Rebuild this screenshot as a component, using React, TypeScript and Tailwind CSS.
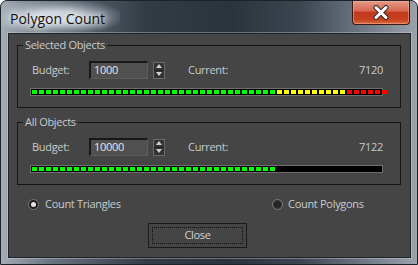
import React from "react";

const font = { fontFamily: '"Open Sans", "Noto Sans", sans-serif' };

function Bar({ green, yellow, red }: { green: number; yellow: number; red: number }) {
    const segs: string[] = [];
    for (let i = 0; i < green; i++) segs.push("bg-[#00ff00]");
    for (let i = 0; i < yellow; i++) segs.push("bg-[#ffff00]");
    for (let i = 0; i < red; i++) segs.push("bg-[#ff0000]");
    return (
        <div className="ml-[12px] mt-[9px] h-[8px] w-[353px] border border-[#6e6e6e] bg-black flex items-center gap-[2px] pl-[1px] overflow-visible">
            {segs.map((c, i) => (
                <div key={i} className={`h-[4px] w-[5px] shrink-0 ${c}`}></div>
            ))}
        </div>
    );
}

function Spinner() {
    return (
        <div className="ml-[5px] w-[12px] h-[17px] border border-[#6a6a6a] bg-[#333333] flex flex-col">
            <div className="flex-1 flex items-center justify-center border-b border-[#222222]">
                <svg width="6" height="4" viewBox="0 0 6 4"><path d="M0 4 L3 0 L6 4 Z" fill="#d0d0d0" /></svg>
            </div>
            <div className="flex-1 flex items-center justify-center">
                <svg width="6" height="4" viewBox="0 0 6 4"><path d="M0 0 L3 4 L6 0 Z" fill="#d0d0d0" /></svg>
            </div>
        </div>
    );
}

function Group({ title, budget, current, children }: { title: string; budget: string; current: string; children: React.ReactNode }) {
    return (
        <div className="relative ml-[8px] w-[384px] h-[63px] border border-[#151515]">
            <span className="absolute -top-[9px] left-[5px] px-[2px] bg-[#454545] text-[11px] leading-[16px] text-[#c6cbd0]">{title}</span>
            <div className="flex items-center pl-[14px] pr-[17px] pt-[15px] h-[33px]">
                <span className="w-[57px] text-[11px] text-[#c6cbd0]">Budget:</span>
                <div className="w-[59px] h-[18px] border-t-2 border-l-2 border-b border-r border-t-[#181818] border-l-[#181818] border-b-[#5c5c5c] border-r-[#5c5c5c] bg-[#505050] pl-[3px] text-[11px] leading-[13px] text-[#e6e6e6]">
                    {budget}
                </div>
                <Spinner />
                <span className="ml-[23px] flex-1 text-[11px] text-[#c6cbd0]">Current:</span>
                <span className="text-[11px] text-[#c6cbd0]">{current}</span>
            </div>
            {children}
        </div>
    );
}

export default function App(): JSX.Element {
    return (
        <div style={font} className="w-[418px] h-[265px] rounded-t-[7px] border border-[#1d2228] bg-[linear-gradient(to_right,#a3acb5_0%,#6a747e_12%,#333b45_35%,#2b333d_55%,#3d4650_72%,#7f8993_92%,#9aa3ac_100%)] flex flex-col overflow-hidden">
            <div className="h-[32px] flex items-start justify-between">
                <div className="-ml-[6px] px-[15px] h-[32px] flex items-center bg-[radial-gradient(ellipse_at_center,rgba(225,232,240,0.8)_25%,rgba(200,210,220,0.35)_55%,rgba(200,210,220,0)_78%)]">
                    <span className="pt-[2px] text-[14px] text-[#111111] [text-shadow:0_0_6px_#ffffff,0_0_10px_#ffffff]">Polygon Count</span>
                </div>
                <div className="mr-[7px] w-[58px] h-[24px] rounded-b-[4px] border border-t-0 border-[#3d1810] shadow-[inset_0_0_0_1px_rgba(255,190,170,0.45)] bg-[linear-gradient(to_bottom,#e29a88_0%,#d66a52_42%,#c23a1e_50%,#c4401f_80%,#de6a40_100%)] flex items-center justify-center">
                    <svg width="16" height="15" viewBox="0 0 16 15">
                        <path d="M3 2.5 L13 12.5 M13 2.5 L3 12.5" stroke="#3a2a28" strokeWidth="5" strokeLinecap="round" />
                        <path d="M3 2.5 L13 12.5 M13 2.5 L3 12.5" stroke="#ffffff" strokeWidth="3" strokeLinecap="round" />
                    </svg>
                </div>
            </div>
            <div className="ml-[7px] w-[403px] h-[225px] border border-[#1f2429] shadow-[0_0_0_1px_rgba(220,228,236,0.35)] bg-[#454545] flex flex-col tracking-[-0.3px]">
                <div className="mt-[11px]">
                    <Group title="Selected Objects" budget="1000" current="7120">
                        <Bar green={35} yellow={10} red={6} />
                    </Group>
                </div>
                <div className="mt-[14px]">
                    <Group title="All Objects" budget="10000" current="7122">
                        <Bar green={35} yellow={0} red={0} />
                    </Group>
                </div>
                <div className="mt-[14px] h-[11px] flex items-center text-[11px] text-[#c6cbd0]">
                    <div className="ml-[19px] w-[11px] h-[11px] rounded-full border border-[#7c7c7c] bg-[#1e1e1e] flex items-center justify-center">
                        <div className="w-[5px] h-[5px] rounded-full bg-[#e4e4e4]"></div>
                    </div>
                    <span className="ml-[6px] w-[227px]">Count Triangles</span>
                    <div className="w-[11px] h-[11px] rounded-full border border-[#7c7c7c] bg-[radial-gradient(circle,#262626_40%,#3a3a3a_100%)]"></div>
                    <span className="ml-[5px]">Count Polygons</span>
                </div>
                <div className="mt-[13px] ml-[139px] w-[99px] h-[25px] border border-[#1a1a1a] p-[3px]">
                    <div className="w-full h-full border border-dotted border-[#0c0c0c] flex items-center justify-center text-[11px] text-[#d2d2d2]">
                        Close
                    </div>
                </div>
            </div>
        </div>
    );
}
